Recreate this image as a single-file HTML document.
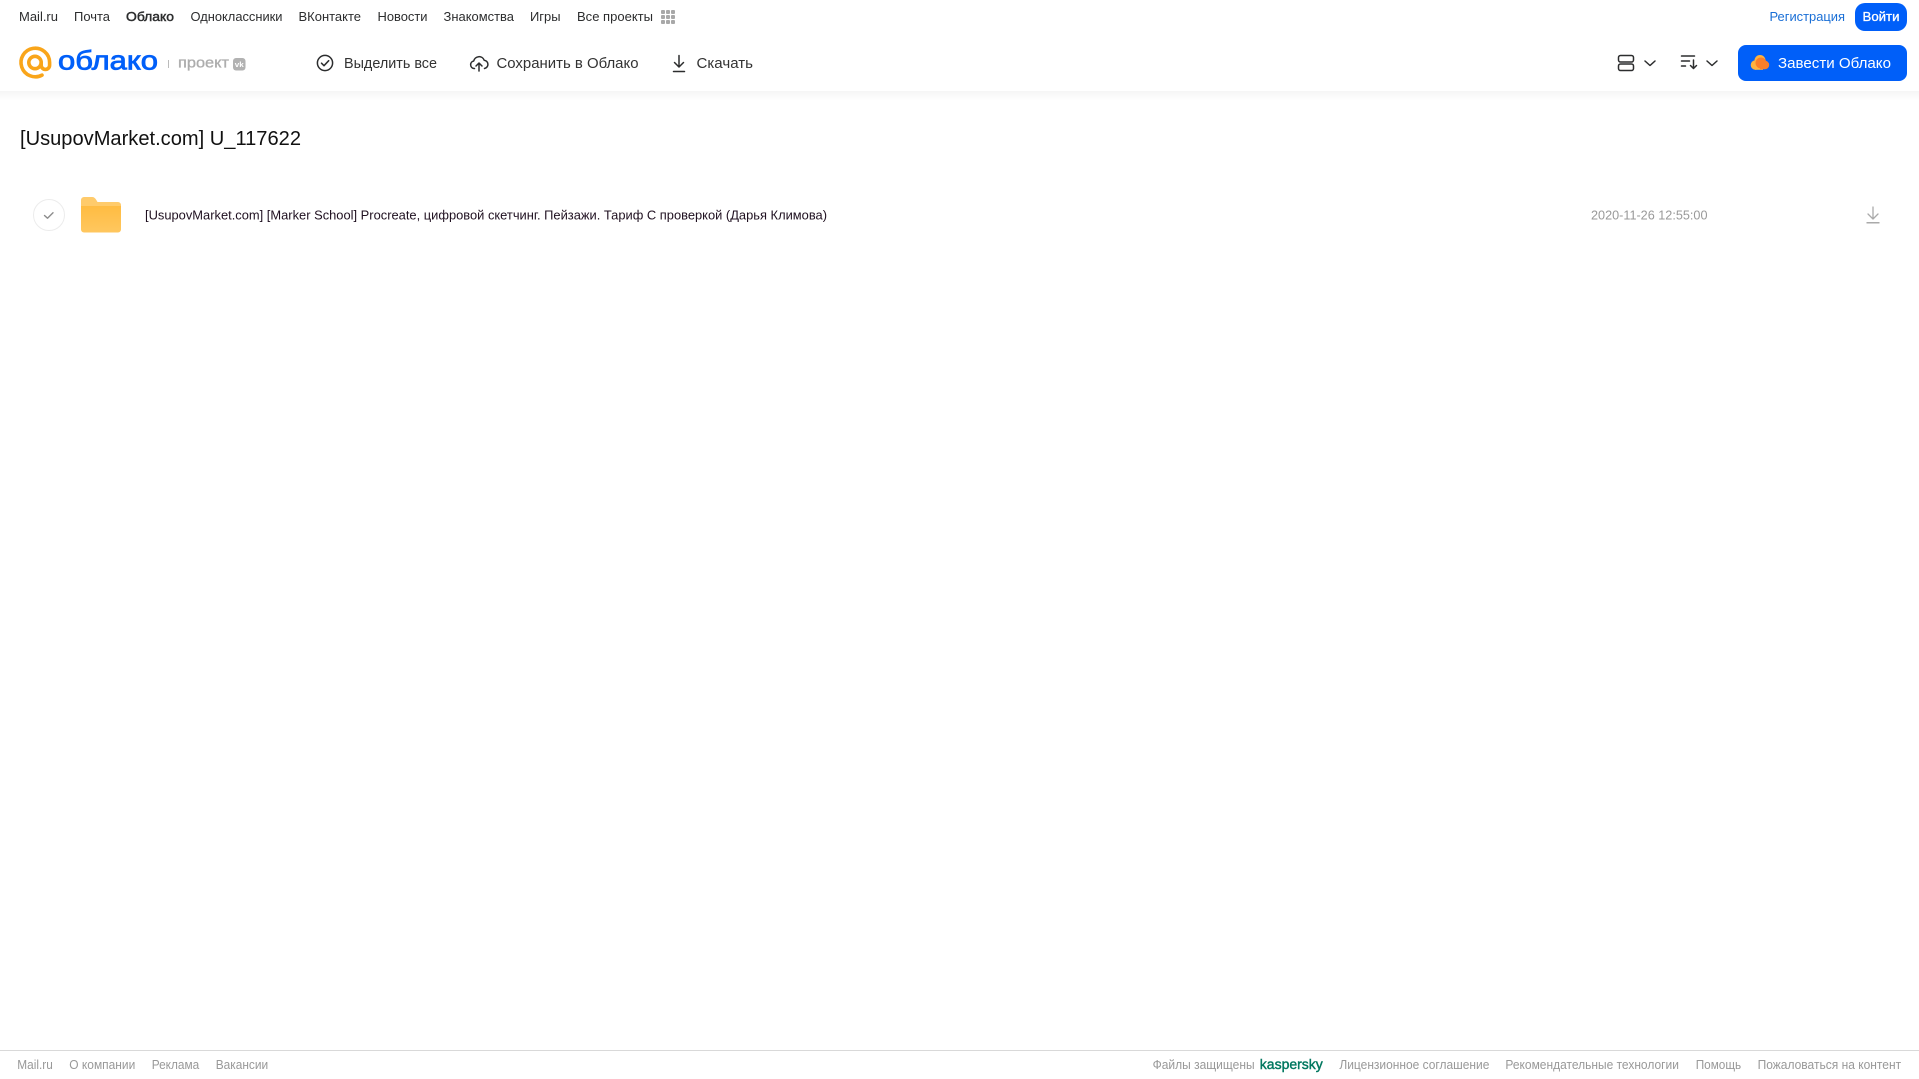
<!DOCTYPE html>
<html lang="ru"><head><meta charset="utf-8"><title>[UsupovMarket.com] U_117622</title>
<style>
html,body{margin:0;padding:0;background:#fff;width:1919px;height:1079px;overflow:hidden}
svg{display:block}
text{font-family:"Liberation Sans",sans-serif;white-space:pre}
.n{font-size:13px;fill:#2c2d2e}
.a{font-size:14.5px;fill:#333}
.f{font-size:12.5px;fill:#999}
.i{fill:none;stroke:#2c2d2e;stroke-width:1.5;stroke-linecap:round;stroke-linejoin:round}
</style></head><body>
<svg width="1919" height="1079" viewBox="0 0 1919 1079" xmlns="http://www.w3.org/2000/svg">
<defs>
<linearGradient id="s" x1="0" y1="0" x2="0" y2="1"><stop offset="0" stop-color="#f5f5f5"/><stop offset="1" stop-color="#fff"/></linearGradient>
<linearGradient id="fg" x1="0" y1="0" x2="0" y2="1"><stop offset="0" stop-color="#ffbc42"/><stop offset="1" stop-color="#ffc75f"/></linearGradient>
</defs>
<rect width="1919" height="1079" fill="#fff"/>
<rect x="0" y="91" width="1919" height="10" fill="url(#s)"/>

<!-- top nav -->
<text class="n" x="19" y="21" textLength="39" lengthAdjust="spacingAndGlyphs">Mail.ru</text>
<text class="n" x="74" y="21" textLength="36" lengthAdjust="spacingAndGlyphs">Почта</text>
<text class="n" x="126" y="21" textLength="48" lengthAdjust="spacingAndGlyphs" stroke="#2c2d2e" stroke-width="0.45">Облако</text>
<text class="n" x="190.500" y="21" textLength="92" lengthAdjust="spacingAndGlyphs">Одноклассники</text>
<text class="n" x="298.500" y="21" textLength="62.500" lengthAdjust="spacingAndGlyphs">ВКонтакте</text>
<text class="n" x="377.500" y="21" textLength="50" lengthAdjust="spacingAndGlyphs">Новости</text>
<text class="n" x="443.500" y="21" textLength="70.500" lengthAdjust="spacingAndGlyphs">Знакомства</text>
<text class="n" x="530" y="21" textLength="30.500" lengthAdjust="spacingAndGlyphs">Игры</text>
<text class="n" x="577" y="21" textLength="76" lengthAdjust="spacingAndGlyphs">Все проекты</text>
<g fill="#a8a8a8">
<rect x="661" y="10" width="4" height="4" rx="1"/><rect x="666" y="10" width="4" height="4" rx="1"/><rect x="671" y="10" width="4" height="4" rx="1"/>
<rect x="661" y="15" width="4" height="4" rx="1"/><rect x="666" y="15" width="4" height="4" rx="1"/><rect x="671" y="15" width="4" height="4" rx="1"/>
<rect x="661" y="20" width="4" height="4" rx="1"/><rect x="666" y="20" width="4" height="4" rx="1"/><rect x="671" y="20" width="4" height="4" rx="1"/>
</g>
<text x="1769.500" y="21" font-size="13" fill="#1a6fd6" textLength="75.500" lengthAdjust="spacingAndGlyphs">Регистрация</text>
<rect x="1855" y="3" width="52" height="28" rx="10" fill="#005ff9"/>
<text x="1862.500" y="21" font-size="13" fill="#fff" stroke="#fff" stroke-width="0.3" textLength="37" lengthAdjust="spacingAndGlyphs">Войти</text>

<!-- logo -->
<path d="M41.200 62.500v2.700a4.200 4.200 0 0 0 8.400 0v-2.700a14.300 14.300 0 1 0-7.600 12.600" fill="none" stroke="#f9a51a" stroke-width="3.600" stroke-linecap="round"/>
<circle cx="35" cy="62.500" r="6.200" fill="none" stroke="#f9a51a" stroke-width="3.600"/>
<text x="58" y="69.500" font-size="26.500" fill="#005ff9" stroke="#005ff9" stroke-width="0.8" textLength="100" lengthAdjust="spacingAndGlyphs">облако</text>
<rect x="168" y="60" width="1" height="8" fill="#bbb"/>
<text x="178" y="67.500" font-size="15" fill="#adadad" stroke="#adadad" stroke-width="0.35" textLength="51" lengthAdjust="spacingAndGlyphs">проект</text>
<rect x="233" y="58" width="12.500" height="12.500" rx="3" fill="#b2b2b2"/>
<text x="234.800" y="67" font-size="7.500" font-weight="700" fill="#fff" textLength="9" lengthAdjust="spacingAndGlyphs">vk</text>

<!-- actions -->
<circle class="i" cx="325" cy="63" r="7.600"/>
<path class="i" d="M321.500 63.200l2.500 2.500 4.700-5"/>
<text class="a" x="344" y="68" textLength="93" lengthAdjust="spacingAndGlyphs">Выделить все</text>

<path class="i" d="M474.500 68.500h-.5a3.800 3.800 0 0 1-.3-7.500 5.500 5.500 0 0 1 10.500-.8 4.200 4.200 0 0 1 .3 8.300"/>
<path class="i" d="M479 71v-8m-3 3l3-3 3 3"/>
<text class="a" x="496.500" y="68" textLength="142" lengthAdjust="spacingAndGlyphs">Сохранить в Облако</text>

<path class="i" d="M679 55.500v11.500m-4.500-4.500l4.500 4.500 4.500-4.500M673.500 71.500h11"/>
<text class="a" x="696.500" y="68" textLength="56.500" lengthAdjust="spacingAndGlyphs">Скачать</text>

<!-- right controls -->
<rect class="i" x="1618.500" y="55.500" width="15" height="6.500" rx="2"/>
<rect class="i" x="1618.500" y="64" width="15" height="6.500" rx="2"/>
<path class="i" d="M1645 61l5 4.500 5-4.500"/>
<path class="i" d="M1681.500 56h13M1681.500 61h8M1681.500 66h4M1693.500 60v8.500m-3-3l3 3 3-3" stroke-width="1.200"/>
<path class="i" d="M1707 61l5 4.500 5-4.500"/>

<rect x="1738" y="45" width="169" height="36" rx="8" fill="#005ff9"/>
<g fill="#ffb340"><circle cx="1755.500" cy="65" r="4.800"/><circle cx="1760" cy="60.500" r="5.500"/><rect x="1755" y="63" width="8" height="6.800"/></g>
<g fill="#fa7f2b"><circle cx="1761" cy="63" r="5.500"/><circle cx="1765" cy="65" r="4.200"/><rect x="1760" y="65" width="5" height="4.200"/></g>
<text x="1778" y="68" font-size="14.500" fill="#fff" textLength="113" lengthAdjust="spacingAndGlyphs">Завести Облако</text>

<!-- title -->
<text x="20" y="145" font-size="20" fill="#111" textLength="281" lengthAdjust="spacingAndGlyphs">[UsupovMarket.com] U_117622</text>

<!-- row -->
<circle cx="49" cy="215" r="15.500" fill="#fff" stroke="#ececec" stroke-width="1"/>
<path d="M44.500 215.500l3 2.700 5.500-5.500" fill="none" stroke="#8c8c8c" stroke-width="1.400" stroke-linecap="round" stroke-linejoin="round"/>
<path d="M81 200a3 3 0 0 1 3-3h8c2 0 3 1 4 2.500l1.500 2.500H118a3 3 0 0 1 3 3v5H81z" fill="#ffcb6b"/>
<path d="M81 206h40v23.500a3 3 0 0 1-3 3H84a3 3 0 0 1-3-3z" fill="url(#fg)"/>
<text x="145" y="219.500" font-size="13" fill="#1f1020" textLength="682" lengthAdjust="spacingAndGlyphs">[UsupovMarket.com] [Marker School] Procreate, цифровой скетчинг. Пейзажи. Тариф С проверкой (Дарья Климова)</text>
<text x="1591" y="219.500" font-size="13" fill="#999" textLength="116.500" lengthAdjust="spacingAndGlyphs">2020-11-26 12:55:00</text>
<path d="M1873 207v12m-5-5l5 5 5-5" fill="none" stroke="#aaa" stroke-width="1.300" stroke-linecap="round" stroke-linejoin="round"/>
<rect x="1866.500" y="222" width="13" height="1.500" fill="#aaa"/>

<!-- footer -->
<rect x="0" y="1050" width="1919" height="1" fill="#d9d9d9"/>
<text class="f" x="17.300" y="1069" textLength="35.500" lengthAdjust="spacingAndGlyphs">Mail.ru</text>
<text class="f" x="69.300" y="1069" textLength="66" lengthAdjust="spacingAndGlyphs">О компании</text>
<text class="f" x="151.700" y="1069" textLength="47.500" lengthAdjust="spacingAndGlyphs">Реклама</text>
<text class="f" x="215.700" y="1069" textLength="52.500" lengthAdjust="spacingAndGlyphs">Вакансии</text>
<text class="f" x="1152.600" y="1069" textLength="102" lengthAdjust="spacingAndGlyphs">Файлы защищены</text>
<text x="1259.800" y="1069" font-size="13.500" fill="#00775f" stroke="#00775f" stroke-width="0.4" textLength="63" lengthAdjust="spacingAndGlyphs">kaspersky</text>
<text class="f" x="1339.400" y="1069" textLength="150" lengthAdjust="spacingAndGlyphs">Лицензионное соглашение</text>
<text class="f" x="1505.400" y="1069" textLength="173.500" lengthAdjust="spacingAndGlyphs">Рекомендательные технологии</text>
<text class="f" x="1695.700" y="1069" textLength="45.500" lengthAdjust="spacingAndGlyphs">Помощь</text>
<text class="f" x="1757.600" y="1069" textLength="143.500" lengthAdjust="spacingAndGlyphs">Пожаловаться на контент</text>
</svg>
</body></html>
